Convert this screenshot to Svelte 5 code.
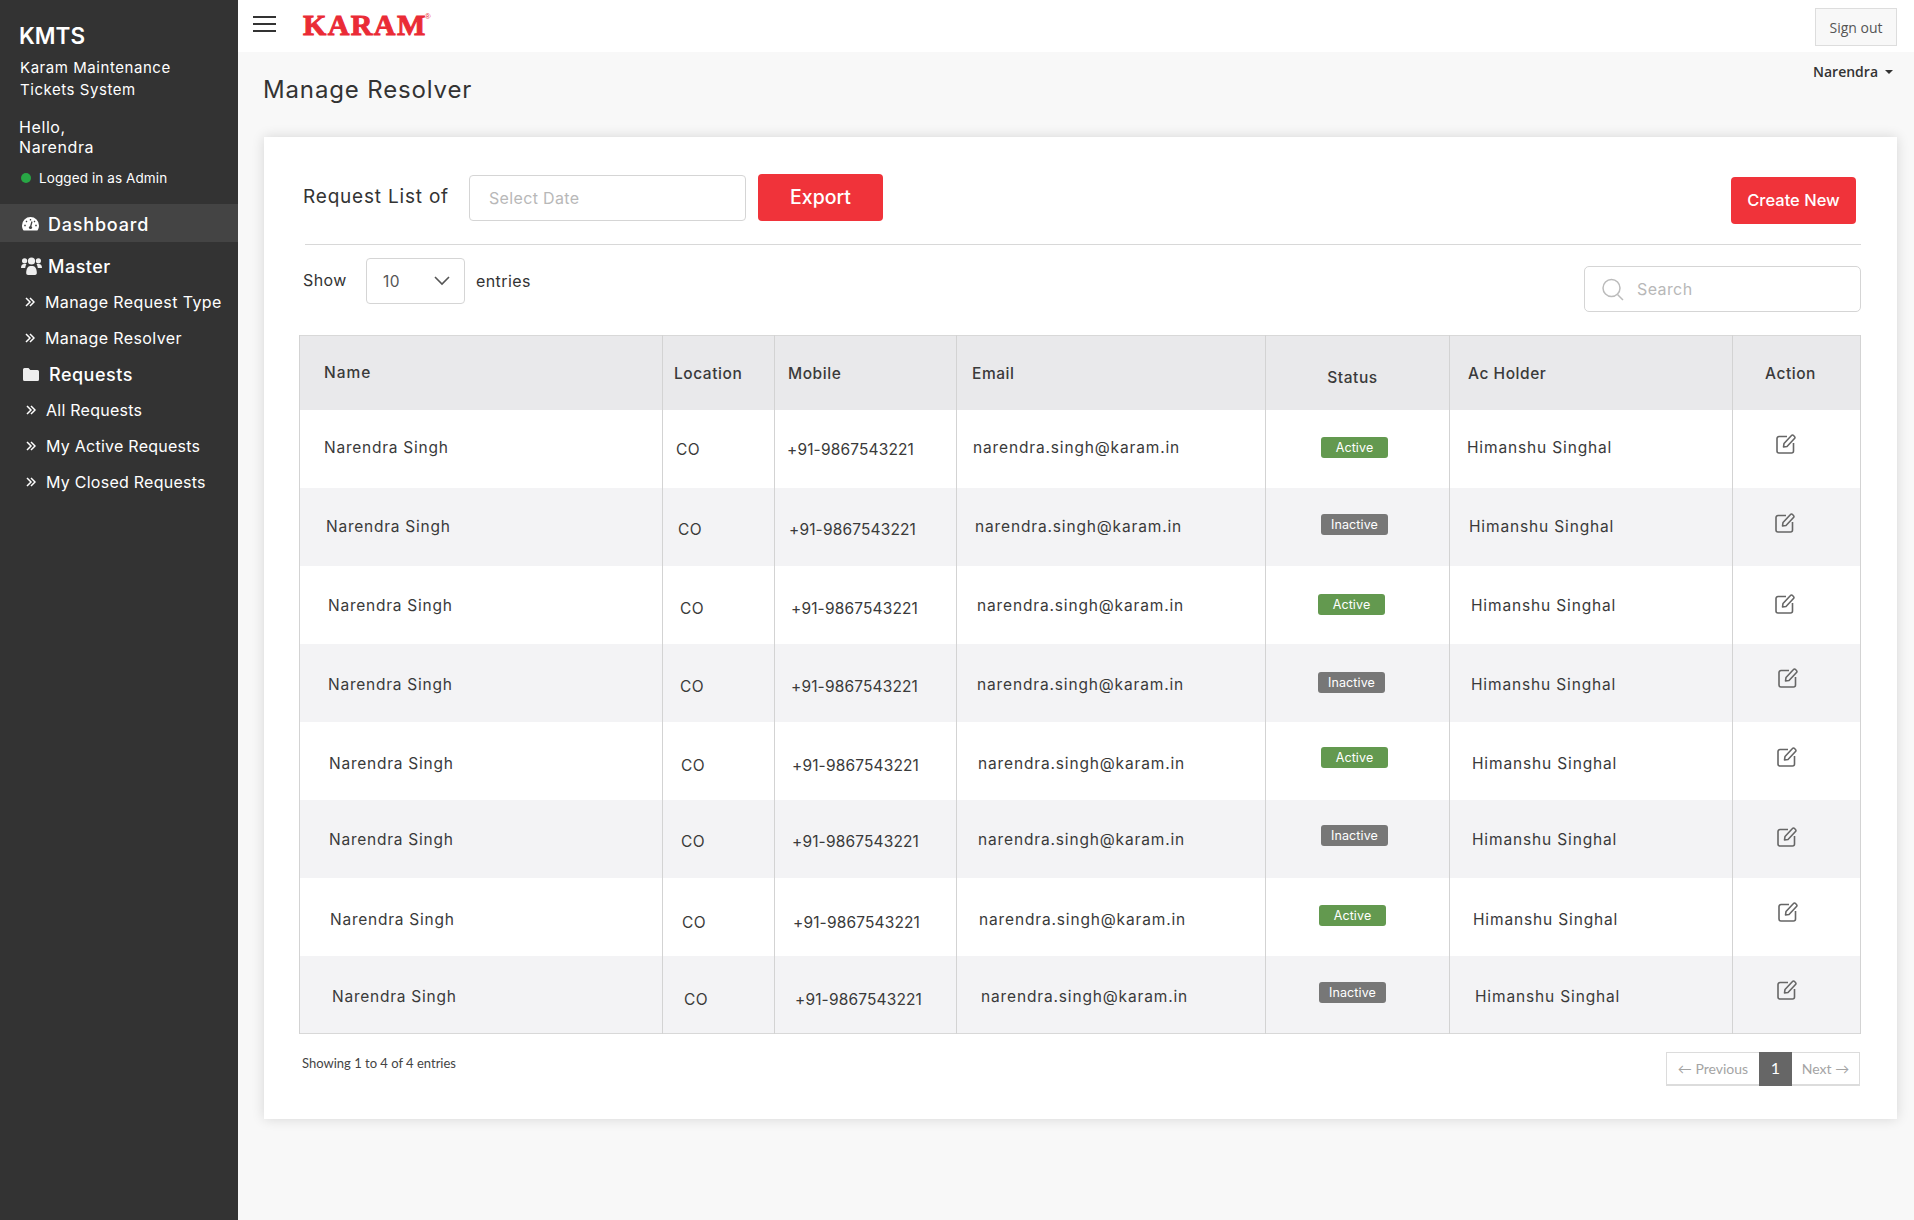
<script>
  // per-row nudges read off the reference, the rows are not quite aligned there
  const rows = [
    { status: 'Active', dx: 0, dy: -2, dl: 0, db: -1.5, bx: 0, di: -5, ix: 0 },
    { status: 'Inactive', dx: 2, dy: -1, dl: 2, db: -2, bx: 0, di: -4, ix: -1 },
    { status: 'Active', dx: 4, dy: 0, dl: 3, db: 0, bx: -3, di: -1, ix: -1 },
    { status: 'Inactive', dx: 4, dy: 1, dl: 3, db: 0, bx: -3, di: -5, ix: 2 },
    { status: 'Active', dx: 5, dy: 2, dl: 4, db: -3, bx: 0, di: -4, ix: 1 },
    { status: 'Inactive', dx: 5, dy: 0, dl: 2, db: -3, bx: 0, di: -2, ix: 1 },
    { status: 'Active', dx: 6, dy: 2, dl: 5, db: -1.5, bx: -2, di: -5, ix: 2 },
    { status: 'Inactive', dx: 8, dy: 1, dl: 4, db: -1.5, bx: -2, di: -4, ix: 1 }
  ];

  const masterLinks = ['Manage Request Type', 'Manage Resolver'];
  const requestLinks = ['All Requests', 'My Active Requests', 'My Closed Requests'];
</script>

<div class="layout">
  <aside class="sidebar">
    <div class="brand">KMTS</div>
    <div class="brand-sub">Karam Maintenance<br />Tickets System</div>
    <div class="hello">Hello,<br />Narendra</div>
    <div class="logged"><span class="dot"></span>Logged in as Admin</div>

    <nav class="nav">
      <a class="nav-head active">
        <svg class="ico" width="17" height="14" viewBox="0 0 17 14">
          <path fill="#fff" d="M8.5 0A8.5 8.5 0 0 0 0 8.5c0 1.9.6 3.6 1.6 5h13.8c1-1.4 1.6-3.1 1.6-5A8.5 8.5 0 0 0 8.5 0z" />
          <path stroke="#444" stroke-width="1.3" fill="none" d="M8.5 2v1.6M4 4l1 1M13 4l-1 1M2.2 8.5h1.6M13.2 8.5h1.6M10 4.5 8.5 10" />
          <circle cx="8.5" cy="10.5" r="1.6" fill="#444" />
        </svg>
        Dashboard
      </a>

      <a class="nav-head master">
        <svg class="ico" width="21" height="18" viewBox="0 0 21 18">
          <g fill="#eee">
            <circle cx="3.6" cy="3.8" r="2.6" />
            <circle cx="17.4" cy="3.8" r="2.6" />
            <circle cx="10.5" cy="4" r="3.6" />
            <path d="M0 11c0-2.400 1.200-4 3-4h2.400C4.700 8.200 4.300 9.500 4.200 11H0zM21 11c0-2.400-1.200-4-3-4h-2.400c.7 1.200 1.100 2.500 1.200 4H21z" />
            <path d="M5.200 16c0-4 1.600-7 4-7h2.600c2.400 0 4 3 4 7 0 1.100-.8 2-1.800 2H7c-1 0-1.800-.9-1.800-2z" />
          </g>
        </svg>
        Master
      </a>
      {#each masterLinks as link}
        <a class="nav-sub">
          <svg class="chev" width="10" height="10" viewBox="0 0 10 10"><path d="M1 1l4 4-4 4M5 1l4 4-4 4" /></svg>
          {link}
        </a>
      {/each}

      <a class="nav-head requests">
        <svg class="ico" width="16" height="13" viewBox="0 0 16 13">
          <path fill="#eee" d="M1.500 0h4l1.800 2h7.200A1.500 1.500 0 0 1 16 3.500v8a1.500 1.500 0 0 1-1.500 1.500h-13A1.500 1.500 0 0 1 0 11.500v-10A1.500 1.500 0 0 1 1.500 0z" />
        </svg>
        Requests
      </a>
      {#each requestLinks as link}
        <a class="nav-sub shifted">
          <svg class="chev" width="10" height="10" viewBox="0 0 10 10"><path d="M1 1l4 4-4 4M5 1l4 4-4 4" /></svg>
          {link}
        </a>
      {/each}
    </nav>
  </aside>

  <div class="main">
    <header class="topbar">
      <div class="burger"><span></span><span></span><span></span></div>
      <div class="logo">KARAM<sup>®</sup></div>
      <button class="signout">Sign out</button>
    </header>

    <div class="page-head">
      <h1>Manage Resolver</h1>
      <div class="user">Narendra <span class="caret"></span></div>
    </div>

    <section class="card">
      <div class="toolbar">
        <div class="toolbar-left">
          <span class="list-label">Request List of</span>
          <div class="date-input">Select Date</div>
          <button class="btn export">Export</button>
        </div>
        <button class="btn create">Create New</button>
      </div>

      <div class="filters">
        <div class="entries">
          <span class="show">Show</span>
          <div class="select">
            10
            <svg width="16" height="10" viewBox="0 0 16 10"><path d="M1 1l7 7 7-7" /></svg>
          </div>
          <span class="entries-word">entries</span>
        </div>
        <div class="search">
          <svg width="22" height="23" viewBox="0 0 22 23"><circle cx="9.500" cy="10" r="8.500" /><path d="M15.500 16.500 21 22" /></svg>
          Search
        </div>
      </div>

      <table>
        <colgroup>
          <col style="width: 363px" />
          <col style="width: 112px" />
          <col style="width: 182px" />
          <col style="width: 309px" />
          <col style="width: 184px" />
          <col style="width: 283px" />
          <col style="width: 128px" />
        </colgroup>
        <thead>
          <tr>
            <th class="c-name">Name</th>
            <th class="c-small">Location</th>
            <th class="c-small mobile">Mobile</th>
            <th class="c-small email">Email</th>
            <th class="c-status">Status</th>
            <th class="c-small holder">Ac Holder</th>
            <th class="c-action">Action</th>
          </tr>
        </thead>
        <tbody>
          {#each rows as r}
            <tr style="--dx: {r.dx}px; --dy: {r.dy * 2}px; --dl: {r.dl * 2}px; --db: {r.db * 2}px; --bx: {r.bx}px; --di: {r.di * 2}px; --ix: {r.ix}px">
              <td class="name">Narendra Singh</td>
              <td class="loc">CO</td>
              <td class="mob">+91-9867543221</td>
              <td class="mail">narendra.singh@karam.in</td>
              <td class="stat">
                <span class="badge" class:inactive={r.status === 'Inactive'}>{r.status}</span>
              </td>
              <td class="hold">Himanshu Singhal</td>
              <td class="act">
                <svg width="21" height="20" viewBox="0 0 21 20">
                  <path class="box" d="M11 2.500H3A2 2 0 0 0 1 4.500v12.500a2 2 0 0 0 2 2h12.500a2 2 0 0 0 2-2v-8" />
                  <path class="box" d="M8 9.500 15.500 1.500a1.300 1.300 0 0 1 2 0l1 1a1.300 1.300 0 0 1 0 2L11 12.500l-3.500.5z" />
                </svg>
              </td>
            </tr>
          {/each}
        </tbody>
      </table>

      <div class="table-foot">
        <span class="showing">Showing 1 to 4 of 4 entries</span>
        <div class="pager">
          <span class="page-link prev">← Previous</span>
          <span class="page-num">1</span>
          <span class="page-link next">Next →</span>
        </div>
      </div>
    </section>
  </div>
</div>

<style>
  :global(body) {
    margin: 0;
    background: #f8f8f8;
    font-family: Inter, 'Noto Sans', sans-serif;
    color: #333;
  }

  .layout {
    display: flex;
    min-height: 1220px;
  }

  /* sidebar */
  .sidebar {
    width: 238px;
    flex-shrink: 0;
    background: #333;
    color: #fff;
    padding-top: 22px;
    box-sizing: border-box;
  }

  .brand {
    font-size: 22.500px;
    line-height: 28px;
    font-weight: 600;
    padding-left: 19px;
  }

  .brand-sub {
    font-size: 15px;
    line-height: 22px;
    letter-spacing: 0.55px;
    padding: 7px 0 0 20px;
  }

  .hello {
    font-size: 16px;
    line-height: 20px;
    padding: 16px 0 0 19px;
    letter-spacing: 0.6px;
  }

  .logged {
    display: flex;
    align-items: center;
    font-size: 13.500px;
    line-height: 20px;
    padding: 11px 0 1px 21px;
    letter-spacing: 0.1px;
  }

  .dot {
    width: 10px;
    height: 10px;
    border-radius: 50%;
    background: #28a745;
    margin-right: 8px;
  }

  .nav {
    display: flex;
    flex-direction: column;
    margin-top: 15px;
  }

  .nav-head {
    display: flex;
    align-items: center;
    height: 36px;
    font-size: 18px;
    font-weight: 500;
    letter-spacing: 0.5px;
  }

  .nav-head.active {
    height: 38px;
    box-sizing: border-box;
    padding: 2px 0 0 22px;
    background: #444;
    gap: 9px;
    letter-spacing: 0.8px;
    margin-bottom: 6px;
  }

  .nav-head.master {
    padding-left: 21px;
    gap: 6px;
  }

  .nav-head.requests {
    padding-left: 23px;
    gap: 10px;
  }

  .nav-sub {
    display: flex;
    align-items: center;
    height: 36px;
    font-size: 16px;
    letter-spacing: 0.4px;
    padding-left: 25px;
    gap: 10px;
  }

  .nav-sub.shifted {
    padding-left: 26px;
    letter-spacing: 0.25px;
  }

  .chev path {
    fill: none;
    stroke: #fff;
    stroke-width: 1.5;
  }

  /* top */
  .main {
    flex: 1;
    min-width: 0;
    display: flex;
    flex-direction: column;
  }

  .topbar {
    display: flex;
    align-items: flex-start;
    height: 52px;
    background: #fff;
    padding-right: 17px;
    box-sizing: border-box;
  }

  .burger {
    display: flex;
    flex-direction: column;
    gap: 5px;
    margin: 16px 0 0 15px;
    width: 23px;
  }

  .burger span {
    height: 2px;
    background: #333;
  }

  .logo {
    font-family: 'Liberation Serif', serif;
    font-weight: 700;
    font-size: 30px;
    line-height: 30px;
    letter-spacing: 1.4px;
    color: #ea2b36;
    -webkit-text-stroke: 1px #ea2b36;
    margin: 10px 0 0 27px;
  }

  .logo sup {
    font-size: 8px;
    line-height: 0;
    font-weight: 400;
    letter-spacing: 0;
    vertical-align: 16px;
    margin-left: -2px;
    -webkit-text-stroke: 0;
    font-family: 'Liberation Sans', sans-serif;
  }

  .signout {
    margin: 8px 0 0 auto;
    width: 82px;
    height: 38px;
    background: #f8f8f8;
    border: 1px solid #ddd;
    color: #555;
    font-family: 'Open Sans', sans-serif;
    font-size: 14px;
    padding: 0;
  }

  .page-head {
    display: flex;
    justify-content: space-between;
    align-items: flex-start;
    height: 85px;
    padding: 0 21px 0 25px;
  }

  h1 {
    margin: 0;
    padding-top: 21px;
    font-size: 24px;
    line-height: 34px;
    font-weight: 400;
    letter-spacing: 0.85px;
    color: #333;
  }

  .user {
    display: flex;
    align-items: center;
    gap: 7px;
    padding-top: 10px;
    font-family: 'Open Sans', sans-serif;
    font-size: 14px;
    line-height: 20px;
    font-weight: 600;
    color: #333;
  }

  .caret {
    width: 0;
    height: 0;
    border-left: 4px solid transparent;
    border-right: 4px solid transparent;
    border-top: 4px solid #333;
  }

  /* card */
  .card {
    margin: 0 17px 0 26px;
    height: 982px;
    box-sizing: border-box;
    background: #fff;
    padding: 37px 36px 0 35px;
    box-shadow: 0 0 12px rgba(0, 0, 0, 0.14);
  }

  .toolbar {
    display: flex;
    justify-content: space-between;
    align-items: flex-start;
    height: 70px;
    margin-left: 6px;
    border-bottom: 1px solid #d8d8d8;
  }

  .toolbar-left {
    display: flex;
    align-items: flex-start;
  }

  .list-label {
    margin: 9px 0 0 -2px;
    width: 166px;
    font-size: 19px;
    line-height: 28px;
    letter-spacing: 0.8px;
    color: #333;
  }

  .date-input {
    width: 277px;
    height: 46px;
    margin-top: 1px;
    box-sizing: border-box;
    border: 1px solid #d5d5d5;
    border-radius: 4px;
    padding-left: 19px;
    font-size: 16px;
    line-height: 44px;
    letter-spacing: 0.35px;
    color: #b8b8b8;
  }

  .btn {
    border: 0;
    border-radius: 4px;
    background: #f0333a;
    color: #fff;
    font-family: Inter, sans-serif;
    font-weight: 500;
    padding: 0 0 2px;
  }

  .export {
    width: 125px;
    height: 47px;
    margin-left: 12px;
    font-size: 19.500px;
  }

  .create {
    width: 125px;
    height: 47px;
    margin: 3px 5px 0 0;
    font-size: 16.500px;
  }

  .filters {
    display: flex;
    justify-content: space-between;
    align-items: flex-start;
    height: 90px;
    padding: 13px 0 0 4px;
    box-sizing: border-box;
  }

  .entries {
    display: flex;
    align-items: center;
    height: 46px;
    font-size: 16px;
    letter-spacing: 0.4px;
  }

  .show {
    width: 63px;
    padding-bottom: 3px;
  }

  .select {
    display: flex;
    align-items: center;
    justify-content: space-between;
    width: 99px;
    height: 46px;
    box-sizing: border-box;
    border: 1px solid #d5d5d5;
    border-radius: 4px;
    padding: 0 14px 0 16px;
    color: #555;
    font-size: 15.500px;
  }

  .select path {
    fill: none;
    stroke: #555;
    stroke-width: 1.6;
  }

  .entries-word {
    margin-left: 11px;
  }

  .search {
    display: flex;
    align-items: center;
    gap: 13px;
    width: 277px;
    height: 46px;
    margin-top: 8px;
    box-sizing: border-box;
    border: 1px solid #d5d5d5;
    border-radius: 5px;
    padding-left: 17px;
    color: #b8b8b8;
    font-size: 16px;
    letter-spacing: 0.4px;
  }

  .search circle,
  .search path {
    fill: none;
    stroke: #bbb;
    stroke-width: 1.5;
  }

  /* table */
  table {
    width: 1561px;
    table-layout: fixed;
    border-collapse: collapse;
    border: 1px solid #d8d8d8;
    font-size: 15.500px;
    letter-spacing: 0.55px;
    color: #3a3a3a;
  }

  thead tr {
    height: 74px;
    background: #e9e9eb;
  }

  tbody tr {
    height: 78px;
  }

  tbody tr:nth-child(even) {
    background: #f3f3f5;
  }

  th,
  td {
    border-left: 1px solid #d3d3d3;
    border-right: 1px solid #d3d3d3;
    padding: 0;
    text-align: left;
    font-weight: 400;
    box-sizing: border-box;
  }

  th {
    font-weight: 500;
    padding-top: 2px;
  }

  .c-name {
    padding-left: 24px;
    padding-bottom: 2px;
    letter-spacing: 1px;
  }

  .c-small {
    padding-left: 11px;
  }

  .c-small.mobile {
    padding-left: 13px;
  }

  .c-small.email {
    padding-left: 15px;
  }

  .c-small.holder {
    padding-left: 18px;
  }

  .c-status {
    text-align: center;
    padding-top: 10px;
    padding-right: 10px;
  }

  .c-action {
    text-align: center;
    padding-right: 12px;
  }

  tbody td {
    padding-top: calc(22px + var(--dy));
    padding-bottom: 20px;
  }

  td.name {
    padding-left: calc(24px + var(--dx));
    letter-spacing: 0.75px;
  }

  td.loc {
    padding-left: calc(13px + var(--dx));
    padding-top: calc(22px + var(--dl));
  }

  td.mob {
    padding-left: calc(12px + var(--dx));
    padding-top: calc(22px + var(--dl));
    letter-spacing: 0.15px;
  }

  td.mail {
    padding-left: calc(16px + var(--dx));
    letter-spacing: 0.85px;
  }

  td.hold {
    padding-left: calc(17px + var(--dx));
    letter-spacing: 0.85px;
  }

  td.stat {
    padding-left: calc(55px + var(--bx));
    padding-top: calc(20px + var(--db));
  }

  td.act {
    padding-left: calc(43px + var(--ix));
    padding-top: calc(20px + var(--di));
    line-height: 0;
  }

  .badge {
    display: block;
    width: 67px;
    height: 21px;
    border-radius: 3px;
    background: #63994f;
    color: #fff;
    font-size: 12.500px;
    line-height: 21px;
    letter-spacing: 0.1px;
    text-align: center;
  }

  .badge.inactive {
    background: #777;
  }

  .box {
    fill: none;
    stroke: #666;
    stroke-width: 1.600;
    stroke-linejoin: round;
  }

  /* footer */
  .table-foot {
    display: flex;
    justify-content: space-between;
    align-items: flex-start;
    padding: 18px 1px 0 3px;
  }

  .showing {
    font-family: Lato, 'Noto Sans', sans-serif;
    font-size: 13px;
    line-height: 24px;
    color: #444;
    margin-top: -1px;
  }

  .pager {
    display: flex;
    height: 34px;
    box-sizing: border-box;
    border: 1px solid #dcdcdc;
    border-bottom-width: 2px;
    font-family: Lato, Inter, sans-serif;
    font-size: 14px;
    color: #a4a4a4;
  }

  .page-link {
    display: flex;
    align-items: center;
    justify-content: center;
  }

  .prev {
    width: 92px;
  }

  .next {
    width: 67px;
  }

  .page-num {
    display: flex;
    align-items: center;
    justify-content: center;
    width: 33px;
    margin: -1px 0 -2px;
    padding-bottom: 3px;
    box-sizing: border-box;
    background: #666;
    color: #fff;
    font-size: 16px;
  }
</style>
